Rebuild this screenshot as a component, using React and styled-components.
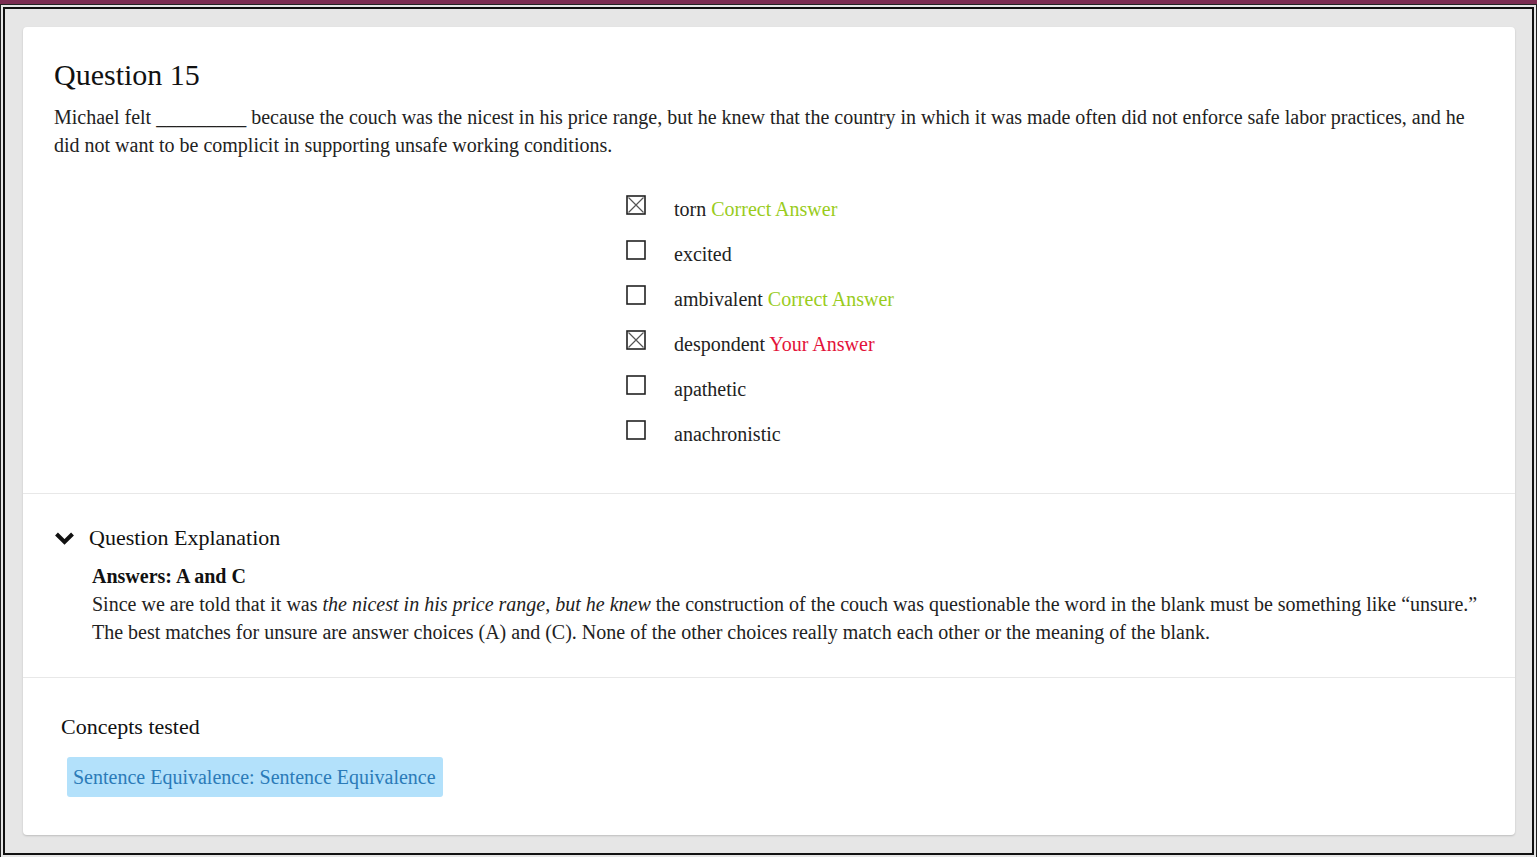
import styled, { createGlobalStyle } from "styled-components";

const GlobalStyle = createGlobalStyle`
  html, body {
    margin: 0;
    padding: 0;
    height: 857px;
    overflow: hidden;
    background: #e6e6e6;
  }
  * {
    box-sizing: border-box;
  }
`;

const Window = styled.div`
  height: 857px;
  border-top: 4px solid #7b2d52;
  background: #e6e6e6;
  font-family: "Liberation Serif", "Times New Roman", serif;
  color: #222;
`;

const Outer = styled.div`
  height: 100%;
  border-top: 1px solid #222;
  border-left: 1px solid #222;
  border-right: 1px solid #222;
  padding: 2px;
`;

const Frame = styled.div`
  height: 100%;
  border: 2px solid #111;
  padding: 18px 17px 18px 18px;
  display: flex;
  flex-direction: column;
`;

const Card = styled.div`
  flex: 1;
  background: #fff;
  border-radius: 4px;
  box-shadow: 0 1px 2px rgba(0, 0, 0, 0.18);
  display: flex;
  flex-direction: column;
`;

const Section = styled.section`
  padding: ${(p) => p.$pad};
  border-top: ${(p) => (p.$divided ? "1px solid #e8e8e8" : "none")};
`;

const Title = styled.h2`
  margin: 0;
  font-size: 30px;
  font-weight: 400;
  line-height: 36px;
  color: #111;
`;

const Prompt = styled.p`
  margin: 10px 0 0;
  font-size: 20px;
  line-height: 28px;
`;

const Options = styled.ul`
  list-style: none;
  margin: 28px 0 0;
  padding: 0 0 0 572px;
`;

const Option = styled.li`
  display: flex;
  align-items: flex-start;
  height: 45px;
  font-size: 20px;
  line-height: 45px;
`;

const Box = styled.svg`
  flex: none;
  width: 20px;
  height: 20px;
  margin-top: 8px;
  margin-right: 28px;
`;

const Tag = styled.span`
  color: ${(p) => (p.$wrong ? "#e3123a" : "#99cc1c")};
`;

const ExplainHead = styled.div`
  display: flex;
  align-items: center;
  gap: 14px;
  font-size: 22px;
  line-height: 30px;
  color: #111;
`;

const ExplainBody = styled.div`
  padding-left: 38px;
  margin-top: 9px;
  font-size: 20px;
  line-height: 28px;
`;

const Strong = styled.div`
  font-weight: 700;
  color: #111;
`;

const Body = styled.p`
  margin: 0;
`;

const ConceptTitle = styled.div`
  font-size: 22px;
  line-height: 30px;
  color: #111;
`;

const Concept = styled.span`
  display: inline-block;
  margin: 15px 0 0 6px;
  padding: 6px 7px 6px 6px;
  background: #b3e1fb;
  color: #2b7bb8;
  border-radius: 3px;
  font-size: 20px;
  line-height: 28px;
`;

function CheckBox({ checked }) {
  return (
    <Box viewBox="0 0 20 20">
      <rect x="1" y="1" width="18" height="18" fill="#fff" stroke="#222" strokeWidth="1.6" />
      {checked && (
        <path d="M2.5 2.5 L17.5 17.5 M17.5 2.5 L2.5 17.5" stroke="#555" strokeWidth="1.2" />
      )}
    </Box>
  );
}

function Chevron() {
  return (
    <svg width="21" height="14" viewBox="0 0 21 14">
      <path d="M2.5 3 L10.5 11 L18.5 3" fill="none" stroke="#111" strokeWidth="4" />
    </svg>
  );
}

const choices = [
  { text: "torn", checked: true, tag: "correct" },
  { text: "excited" },
  { text: "ambivalent", tag: "correct" },
  { text: "despondent", checked: true, tag: "wrong" },
  { text: "apathetic" },
  { text: "anachronistic" },
];

export default function App() {
  return (
    <>
      <GlobalStyle />
      <Window>
        <Outer>
          <Frame>
            <Card>
              <Section $pad="30px 31px 36px">
                <Title>Question 15</Title>
                <Prompt>
                  Michael felt _________ because the couch was the nicest in his price range, but he
                  knew that the country in which it was made often did not enforce safe labor
                  practices, and he did not want to be complicit in supporting unsafe working
                  conditions.
                </Prompt>
                <Options>
                  {choices.map((c) => (
                    <Option key={c.text}>
                      <CheckBox checked={c.checked} />
                      <span>
                        {c.text}
                        {c.tag === "correct" && <Tag> Correct Answer</Tag>}
                        {c.tag === "wrong" && <Tag $wrong> Your Answer</Tag>}
                      </span>
                    </Option>
                  ))}
                </Options>
              </Section>
              <Section $divided $pad="29px 31px 31px">
                <ExplainHead>
                  <Chevron />
                  <span>Question Explanation</span>
                </ExplainHead>
                <ExplainBody>
                  <Strong>Answers: A and C</Strong>
                  <Body>
                    Since we are told that it was{" "}
                    <i>the nicest in his price range, but he knew</i> the construction of the couch
                    was questionable the word in the blank must be something like “unsure.” The best
                    matches for unsure are answer choices (A) and (C). None of the other choices
                    really match each other or the meaning of the blank.
                  </Body>
                </ExplainBody>
              </Section>
              <Section $divided $pad="34px 38px 38px">
                <ConceptTitle>Concepts tested</ConceptTitle>
                <Concept>Sentence Equivalence: Sentence Equivalence</Concept>
              </Section>
            </Card>
          </Frame>
        </Outer>
      </Window>
    </>
  );
}
